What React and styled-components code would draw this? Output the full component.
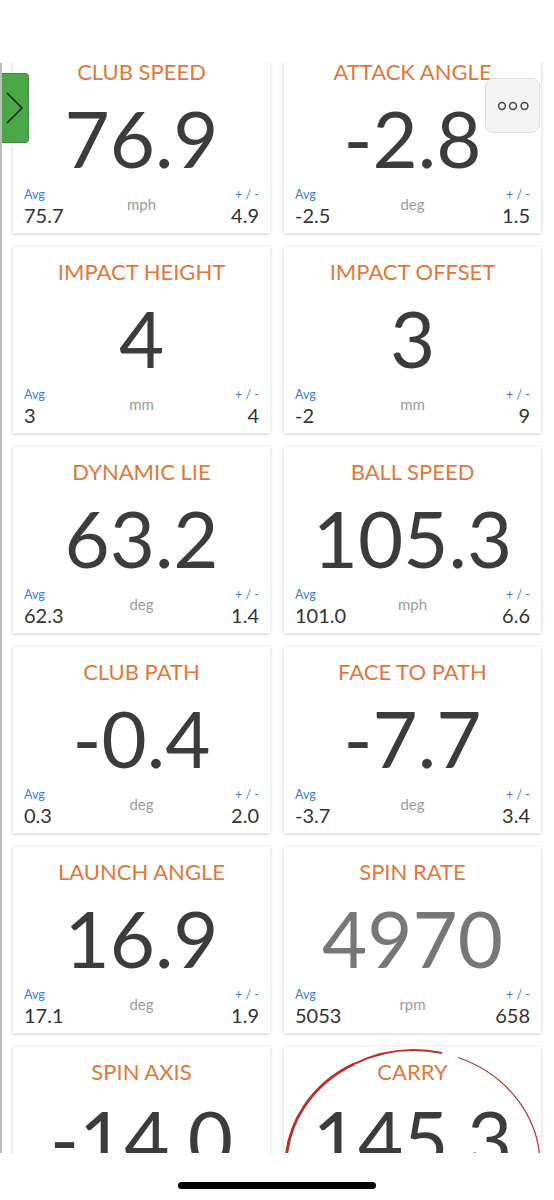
import React from 'react';
import styled, {createGlobalStyle} from 'styled-components';

const GlobalStyle = createGlobalStyle`
    body{
        margin: 0;
        background: #fff;
        font-family: Lato, "Open Sans", sans-serif;
    }
`

const Page = styled('div')`
    width: 554px;
    height: 1200px;
    display: flex;
    flex-direction: column;
    background: #fff;
    overflow: hidden;
`

const TopSpace = styled('div')`
    height: 63px;
    flex-shrink: 0;
`

const Viewport = styled('div')`
    position: relative;
    height: 1090px;
    flex-shrink: 0;
    overflow: hidden;
    border-left: 2px solid #bcbcbc;
`

const Grid = styled('div')`
    display: grid;
    grid-template-columns: repeat(2, 257px);
    gap: 14px;
    padding: 0 13px 0 11px;
    margin-top: -16px;
`

const Card = styled('div')`
    position: relative;
    height: 186px;
    box-sizing: border-box;
    background: #fff;
    box-shadow: 0 1px 4px rgba(0, 0, 0, 0.2);
    padding: 13px 11px 7px;
    display: flex;
    flex-direction: column;
    align-items: center;
`

const Title = styled('div')`
    font-size: 22px;
    line-height: 24px;
    color: #e2773b;
    white-space: nowrap;
`

const Value = styled('div')`
    margin-top: 15px;
    font-size: 78px;
    line-height: 78px;
    color: ${props => props.muted ? '#777' : '#3c3c3c'};
    white-space: nowrap;
`

const Footer = styled('div')`
    margin-top: auto;
    align-self: stretch;
    display: flex;
    justify-content: space-between;
    align-items: flex-end;
`

const Stat = styled('div')`
    display: flex;
    flex-direction: column;
    align-items: ${props => props.right ? 'flex-end' : 'flex-start'};
    min-width: 60px;
`

const StatLabel = styled('span')`
    font-size: 12.5px;
    line-height: 14px;
    color: #3b7bd8;
`

const StatValue = styled('span')`
    margin-top: 2px;
    font-size: 20px;
    line-height: 22px;
    color: #333;
`

const Unit = styled('span')`
    font-size: 15px;
    line-height: 18px;
    color: #9b9b9b;
    margin-bottom: 13px;
`

const SideTab = styled('div')`
    position: absolute;
    left: -2px;
    top: 10px;
    width: 29px;
    height: 70px;
    box-sizing: border-box;
    background: #4ba848;
    border: 1px solid #3d8f3a;
    border-left: none;
    border-radius: 0 4px 4px 0;
    display: flex;
    align-items: center;
    justify-content: center;
    z-index: 2;
`

const MoreButton = styled('div')`
    position: absolute;
    top: 15px;
    right: 14px;
    width: 55px;
    height: 55px;
    box-sizing: border-box;
    background: #f4f4f4;
    border: 1px solid #dedede;
    border-radius: 8px;
    display: flex;
    align-items: center;
    justify-content: center;
    z-index: 2;
`

const Annotation = styled('svg')`
    position: absolute;
    left: 0;
    top: 0;
    width: 257px;
    height: 186px;
    overflow: visible;
    pointer-events: none;
`

const HomeArea = styled('div')`
    flex: 1;
    display: flex;
    justify-content: center;
    padding-top: 29px;
`

const HomeBar = styled('div')`
    width: 198px;
    height: 7px;
    border-radius: 4px;
    background: #000;
`

const metrics = [
    {title: 'CLUB SPEED', value: '76.9', unit: 'mph', avg: '75.7', dev: '4.9'},
    {title: 'ATTACK ANGLE', value: '-2.8', unit: 'deg', avg: '-2.5', dev: '1.5'},
    {title: 'IMPACT HEIGHT', value: '4', unit: 'mm', avg: '3', dev: '4'},
    {title: 'IMPACT OFFSET', value: '3', unit: 'mm', avg: '-2', dev: '9'},
    {title: 'DYNAMIC LIE', value: '63.2', unit: 'deg', avg: '62.3', dev: '1.4'},
    {title: 'BALL SPEED', value: '105.3', unit: 'mph', avg: '101.0', dev: '6.6'},
    {title: 'CLUB PATH', value: '-0.4', unit: 'deg', avg: '0.3', dev: '2.0'},
    {title: 'FACE TO PATH', value: '-7.7', unit: 'deg', avg: '-3.7', dev: '3.4'},
    {title: 'LAUNCH ANGLE', value: '16.9', unit: 'deg', avg: '17.1', dev: '1.9'},
    {title: 'SPIN RATE', value: '4970', unit: 'rpm', avg: '5053', dev: '658', muted: true},
    {title: 'SPIN AXIS', value: '-14.0', unit: 'deg', avg: '-9.8', dev: '4.6'},
    {title: 'CARRY', value: '145.3', unit: 'yds', avg: '139.2', dev: '5.1', circled: true},
];

// hand-drawn ring around the carry card
function Circle(){
    return(
        <Annotation viewBox="0 0 257 186">
            <path d="M 2 140 L 2 118 A 127 115 0 0 1 70 17" fill="none" stroke="#b5322e" strokeWidth="3" />
            <path d="M 70 17 A 127 115 0 0 1 158 6" fill="none" stroke="#b5322e" strokeWidth="2" />
            <path d="M 174 10.5 A 127 115 0 0 1 256 118 L 256 140" fill="none" stroke="#b5322e" strokeWidth="1.2" />
        </Annotation>
    )
}

function MetricCard({m}){
    return(
        <Card>
            <Title>{m.title}</Title>
            <Value muted={m.muted}>{m.value}</Value>
            <Footer>
                <Stat>
                    <StatLabel>Avg</StatLabel>
                    <StatValue>{m.avg}</StatValue>
                </Stat>
                <Unit>{m.unit}</Unit>
                <Stat right>
                    <StatLabel>+ / -</StatLabel>
                    <StatValue>{m.dev}</StatValue>
                </Stat>
            </Footer>
            {m.circled && <Circle />}
        </Card>
    )
}

function App(){
    return(
        <Page>
            <GlobalStyle />
            <TopSpace />
            <Viewport>
                <Grid>
                    {metrics.map(m => <MetricCard key={m.title} m={m} />)}
                </Grid>
                <SideTab>
                    <svg width="20" height="34" viewBox="0 0 20 34">
                        <path d="M 3 2 L 18 17 L 3 32" fill="none" stroke="#222" strokeWidth="1.6" />
                    </svg>
                </SideTab>
                <MoreButton>
                    <svg width="32" height="10" viewBox="0 0 32 10">
                        <circle cx="5" cy="5" r="3.4" fill="none" stroke="#444" strokeWidth="1.5" />
                        <circle cx="16" cy="5" r="3.4" fill="none" stroke="#444" strokeWidth="1.5" />
                        <circle cx="27.5" cy="5" r="3.4" fill="none" stroke="#444" strokeWidth="1.5" />
                    </svg>
                </MoreButton>
            </Viewport>
            <HomeArea>
                <HomeBar />
            </HomeArea>
        </Page>
    )
}

export default App;
